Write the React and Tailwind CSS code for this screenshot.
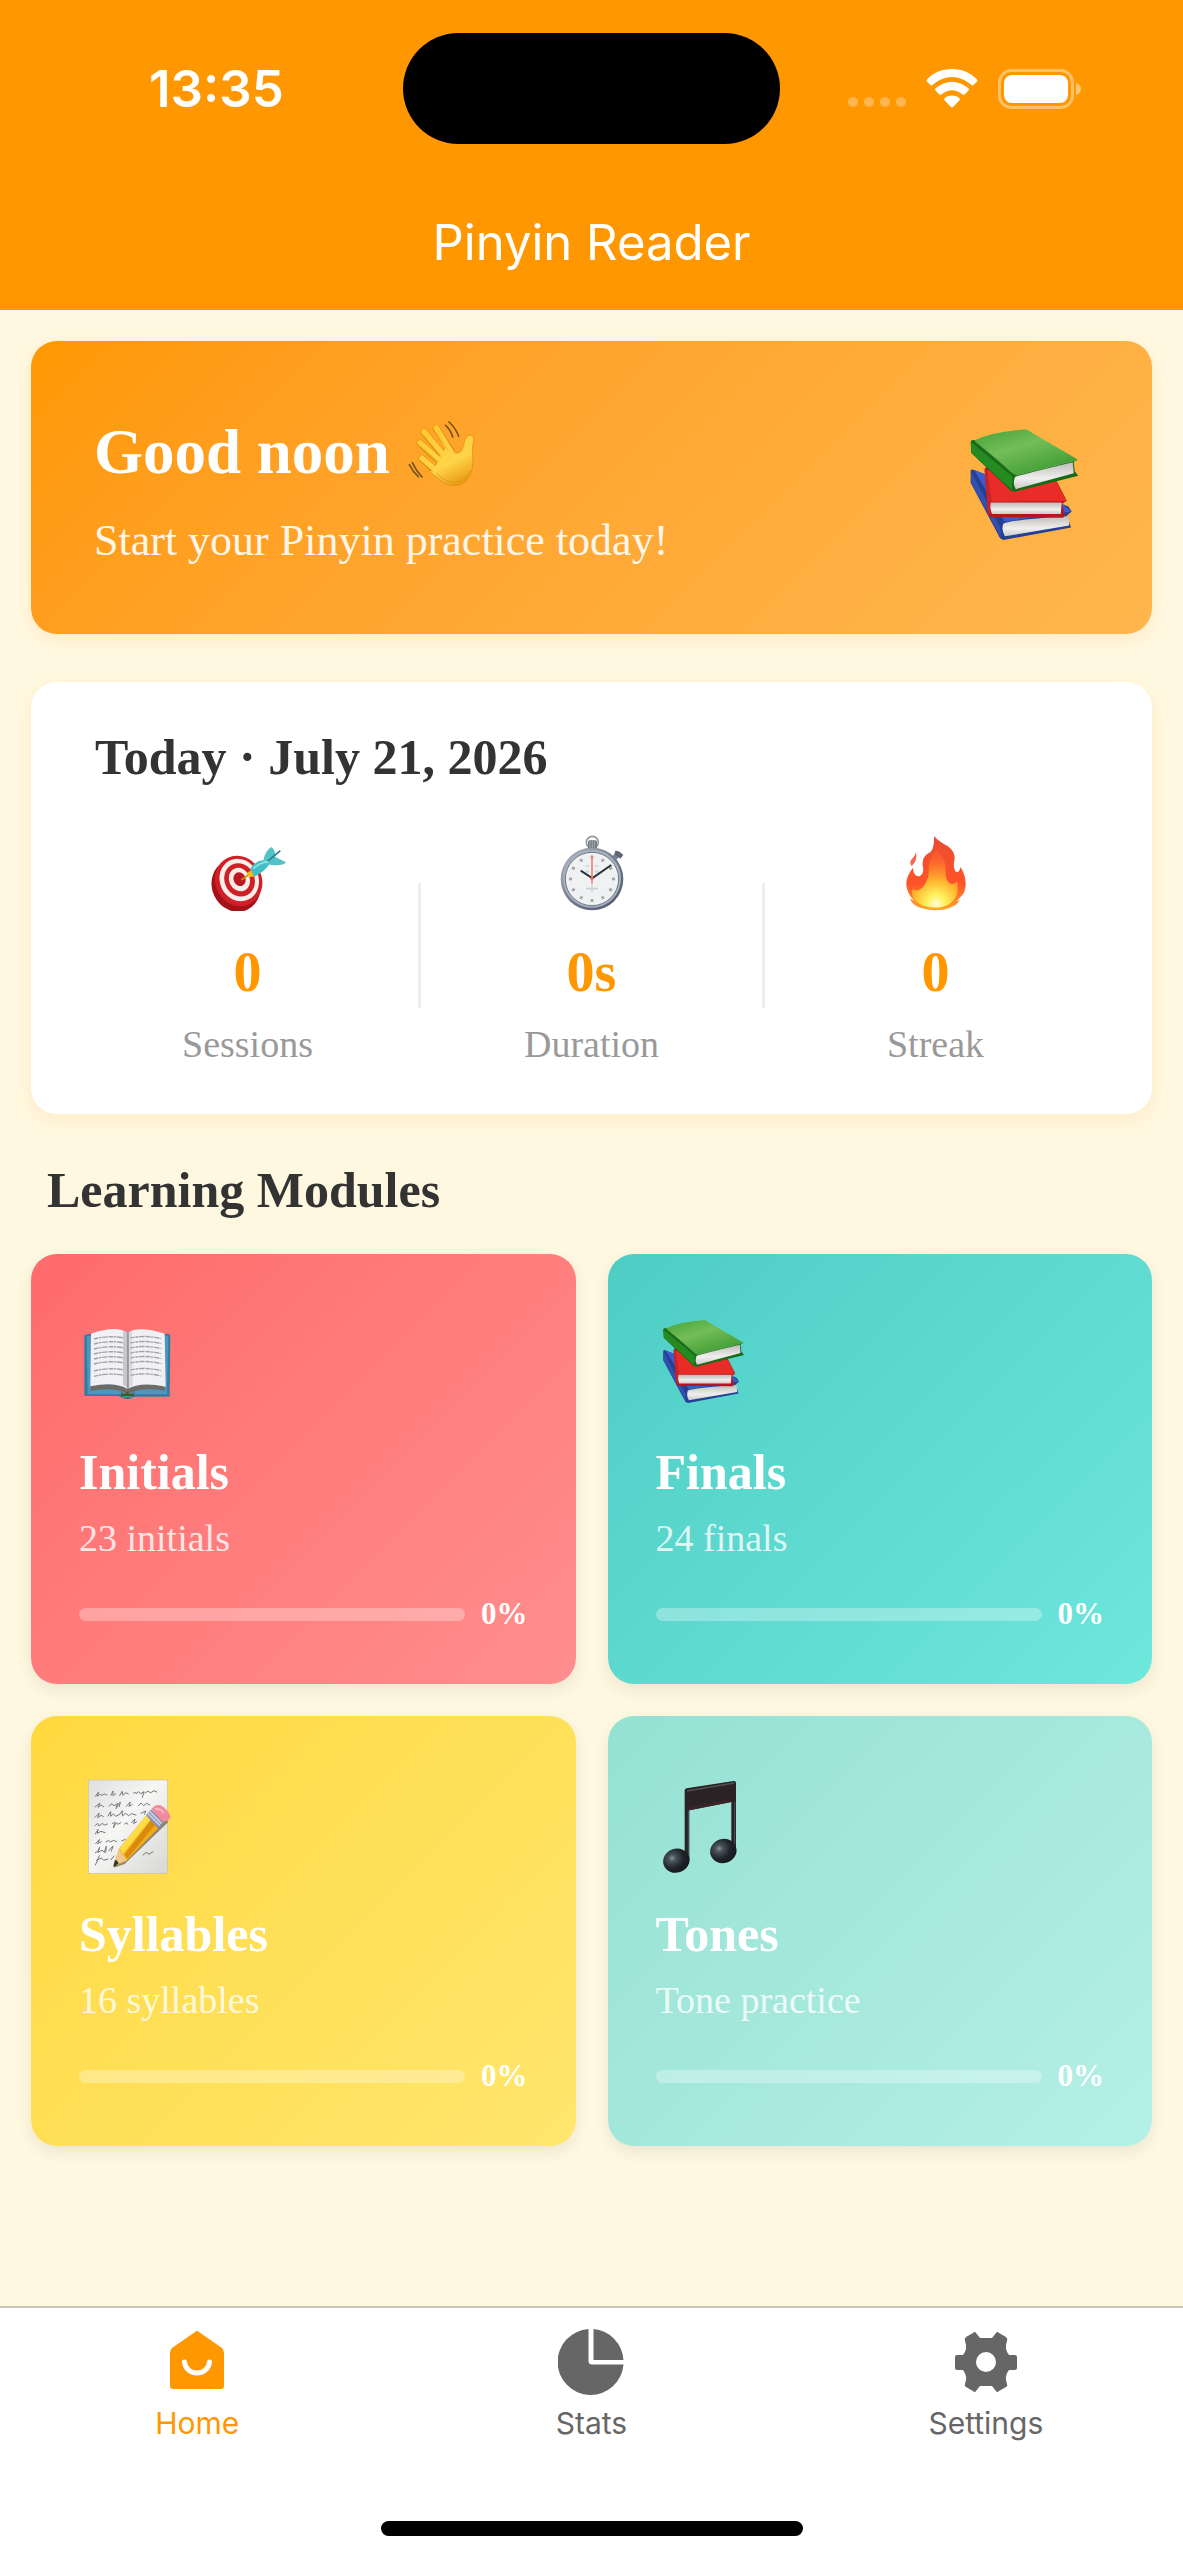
import { useState } from 'react'

const stats = [
  { label: 'Sessions', value: '0', Icon: TargetIcon },
  { label: 'Duration', value: '0s', Icon: StopwatchIcon },
  { label: 'Streak', value: '0', Icon: FireIcon },
]

const modules = [
  { title: 'Initials', sub: '23 initials', progress: 0, Icon: OpenBookIcon, bg: 'from-[#ff6b6b] to-[#ff8e8e]' },
  { title: 'Finals', sub: '24 finals', progress: 0, Icon: BooksIcon, bg: 'from-[#4ecdc4] to-[#6ee7dd]' },
  { title: 'Syllables', sub: '16 syllables', progress: 0, Icon: MemoIcon, bg: 'from-[#ffd93d] to-[#ffe66d]' },
  { title: 'Tones', sub: 'Tone practice', progress: 0, Icon: MusicIcon, bg: 'from-[#95e1d3] to-[#b5f0e6]' },
]

const tabs = [
  { label: 'Home', Icon: HomeIcon },
  { label: 'Stats', Icon: PieIcon },
  { label: 'Settings', Icon: GearIcon },
]

export default function App(){
  const [tab, setTab] = useState('Home')

  return (
    <div className="min-h-screen flex flex-col bg-[#fff8e1] font-['Liberation_Serif',serif] text-[#333]">
      <header className="bg-[#ff9800] text-white">
        <StatusBar />
        <h1 className="pt-[65px] pb-[33px] text-center text-[49px] leading-[68px] font-['Inter',sans-serif]">Pinyin Reader</h1>
      </header>

      <main className="flex-1 px-[31px] pt-[31px]">
        <section className="flex items-center justify-between rounded-[26px] bg-linear-135 from-[#ff9800] to-[#ffb74d] px-[63px] py-[69px] text-white shadow-[0_6px_20px_rgba(255,152,0,0.12)]">
          <div className="pt-[6px]">
            <h2 className="flex items-center gap-4 text-[63px] leading-[72px] font-bold">Good noon <WaveIcon /></h2>
            <p className="mt-[29px] text-[44px] leading-[48px] opacity-90">Start your Pinyin practice today!</p>
          </div>
          <BooksIcon className="size-32" />
        </section>

        <section className="mt-12 rounded-[26px] bg-white px-[46px] pt-[47px] pb-12 shadow-[0_6px_24px_rgba(255,152,0,0.12)]">
          <h2 className="px-[18px] text-[50px] leading-[56px] font-bold">Today · July 21, 2026</h2>
          <div className="mt-10 flex items-center">
            {stats.map((s, i)=>(
              <div key={s.label} className="contents">
                {i > 0 && <div className="h-[125px] w-[3px] bg-[#eee]" />}
                <div className="flex flex-1 flex-col items-center pt-[10px]">
                  <s.Icon />
                  <div className="mt-[29px] text-[56px] leading-[64px] font-bold text-[#ff9800]">{s.value}</div>
                  <div className="mt-[18px] text-[38px] leading-[44px] text-[#999]">{s.label}</div>
                </div>
              </div>
            ))}
          </div>
        </section>

        <h2 className="mt-12 px-4 text-[50px] leading-[56px] font-bold">Learning Modules</h2>
        <div className="mt-9 grid grid-cols-2 gap-8 pb-8">
          {modules.map(m=> <ModuleCard key={m.title} {...m} />)}
        </div>
      </main>

      <footer className="border-t-2 border-[#c9c6ba] bg-white pb-6">
        <nav className="grid grid-cols-3 pt-[21px] font-['Inter',sans-serif]">
          {tabs.map(t=>(
            <a
              key={t.label}
              href={'#' + t.label.toLowerCase()}
              onClick={()=>setTab(t.label)}
              className={`flex flex-col items-center gap-[10px] ${tab===t.label ? 'text-[#ff9800]' : 'text-[#666]'}`}
            >
              <t.Icon />
              <span className="text-[30px] leading-[36px]">{t.label}</span>
            </a>
          ))}
        </nav>
        <div className="mx-auto mt-20 h-[15px] w-[422px] rounded-full bg-black" />
      </footer>
    </div>
  )
}

function StatusBar(){
  return (
    <div className="grid grid-cols-[1fr_377px_1fr] items-center pt-[33px]">
      <div className="pl-[149px] text-[51px] leading-[60px] font-semibold font-['Inter',sans-serif]">13:35</div>
      <div className="h-[111px] rounded-full bg-black" />
      <div className="flex items-center gap-5 pl-[68px]">
        <div className="flex gap-[6px] pt-[26px]">
          {[0, 1, 2, 3].map(n=> <span key={n} className="size-[10px] rounded-full bg-white/30" />)}
        </div>
        <svg className="h-[39px] w-[52px]" viewBox="0 0 52 39" fill="#fff">
          <path d="M26 0C36 0 45 4 51 10.500Q52 11.500 51 12.500L47.500 16Q46.500 17 45.500 16C40 11 33 8 26 8S12 11 6.500 16Q5.500 17 4.500 16L1 12.500Q0 11.500 1 10.500C7 4 16 0 26 0Z" />
          <path d="M26 13C32.500 13 38 15.500 42.500 19.500Q43.500 20.500 42.500 21.500L38.500 25.500Q37.500 26 36.500 25.500C33.500 22.800 30 21.200 26 21.200S18.500 22.800 15.500 25.500Q14.500 26 13.500 25.500L9.500 21.500Q8.500 20.500 9.500 19.500C14 15.500 19.500 13 26 13Z" />
          <path d="M26 26.500C29 26.500 31.500 27.600 33.500 29.200Q34.500 30.200 33.500 31.200L27 38Q26 39 25 38L18.500 31.200Q17.500 30.200 18.500 29.200C20.500 27.600 23 26.500 26 26.500Z" />
        </svg>
        <svg className="h-[40px] w-[83px]" viewBox="0 0 83 40">
          <rect x="1.500" y="1.500" width="73" height="37" rx="12" fill="none" stroke="#fff" strokeOpacity=".4" strokeWidth="3" />
          <rect x="6" y="6" width="64" height="28" rx="8" fill="#fff" />
          <path d="M78 14q5 2 5 6t-5 6z" fill="#fff" fillOpacity=".45" />
        </svg>
      </div>
    </div>
  )
}

function ModuleCard({ title, sub, progress, Icon, bg }){
  return (
    <button className={`rounded-[26px] bg-linear-135 px-12 pt-[62px] pb-[52px] text-left text-white shadow-[0_6px_16px_rgba(0,0,0,0.08)] ${bg}`}>
      <Icon className="size-24" />
      <div className="mt-8 text-[50px] leading-[56px] font-bold">{title}</div>
      <div className="mt-4 text-[38px] leading-[44px] opacity-80">{sub}</div>
      <div className="mt-9 flex items-center gap-4">
        <div className="h-[13px] flex-1 overflow-hidden rounded-full bg-white/30">
          <div className="h-full bg-white" style={{width: progress + '%'}} />
        </div>
        <span className="text-[31px] leading-[36px] font-bold">{progress}%</span>
      </div>
    </button>
  )
}

function WaveIcon(){
  return (
    <svg className="size-[70px]" viewBox="75 45 210 210" fill="none" strokeLinecap="round">
      <defs>
        <linearGradient id="skin" gradientUnits="userSpaceOnUse" x1="140" y1="70" x2="230" y2="250">
          <stop offset="0" stopColor="#ffc930" />
          <stop offset=".65" stopColor="#ffd449" />
          <stop offset="1" stopColor="#e89a13" />
        </linearGradient>
      </defs>
      <g stroke="#d98c0b" strokeWidth="21">
        <path d="M123 170l50 44M118 124l70 64M129 90l65 80M166 79l44 68" />
      </g>
      <path d="M155 205L196 130Q207 136 221 152Q233 158 242 146Q248 132 252 112Q257 99 268 99Q279 102 278 114Q271 143 276 180Q276 224 245 245Q217 257 191 244Q173 233 145 207Z" fill="url(#skin)" stroke="#d98c0b" strokeWidth="2" />
      <g stroke="url(#skin)" strokeWidth="17">
        <path d="M123 169l56 48M118 123l73 65M129 89l68 82M166 78l46 76" />
      </g>
      <path d="M120 177l37 33M119 133l55 47M130 103l48 56M169 94l32 50" stroke="#d99112" strokeWidth="2" opacity=".5" />
      <path d="M168 215Q194 246 236 239Q260 229 270 205" stroke="#d88b0c" strokeWidth="3" opacity=".55" />
      <g stroke="#76501f" strokeWidth="5">
        <path d="M194 70q16 15 21 35M204 60q20 18 29 43M94 182q11 24 29 43M85 188q11 22 27 36" />
      </g>
    </svg>
  )
}

function BooksIcon({ className }){
  return (
    <svg className={className} viewBox="37 66 385 385">
      <defs>
        <linearGradient id="greenCover" x1="0" y1="0" x2=".7" y2="1">
          <stop offset="0" stopColor="#43a237" />
          <stop offset=".45" stopColor="#74bd58" />
          <stop offset="1" stopColor="#3c9b32" />
        </linearGradient>
        <linearGradient id="bookPages" x1="0" y1="0" x2="0" y2="1">
          <stop offset="0" stopColor="#bdbcb9" />
          <stop offset=".6" stopColor="#f0efed" />
          <stop offset="1" stopColor="#cbcac8" />
        </linearGradient>
      </defs>
      {/* blue */}
      <path d="M66 207Q67 200 76 204L360 314L370 329L355 342L368 377L165 415Q153 412 149 399L66 243Z" fill="#253f94" />
      <path d="M76 204L168 360L370 329L340 306Z" fill="#3b5cc9" />
      <path d="M68 210L154 375L158 410L68 244Z" fill="#3350ad" />
      <path d="M164 366Q174 356 361 343L362 371L169 404Q158 386 164 366Z" fill="url(#bookPages)" />
      {/* red */}
      <path d="M108 202Q110 192 122 198L325 238L355 297L341 307L350 341L344 348L129 346Q119 344 118 336Z" fill="#b41620" />
      <path d="M113 204L325 240L354 298L129 300Q121 270 113 204Z" fill="#e92c27" />
      <path d="M108 205Q113 199 117 211L130 300L124 338L118 334Z" fill="#c92328" />
      <path d="M127 302H340L337 337H130Q123 318 127 302Z" fill="url(#bookPages)" />
      {/* green */}
      <path d="M66 121Q67 112 78 115L388 172L376 180L379 208L390 222L199 270Q187 270 180 260L68 153Z" fill="#176b17" />
      <path d="M78 115Q130 89 233 82L388 173Q293 199 205 220Q196 220 188 211Z" fill="url(#greenCover)" />
      <path d="M67 120L192 224L190 264L69 153Z" fill="#258b20" />
      <path d="M200 225Q214 219 373 181L376 214L202 262Q191 246 200 225Z" fill="url(#bookPages)" />
      <path d="M79 118L204 219L386 174" fill="none" stroke="#5ba64b" strokeWidth="3" />
    </svg>
  )
}

function TargetIcon(){
  return (
    <svg className="size-[76px]" viewBox="57 44 228 228">
      <g transform="rotate(-25 140 190)">
        <ellipse cx="133" cy="193" rx="72" ry="80" fill="#a51118" />
        <ellipse cx="146" cy="184" rx="70" ry="77" fill="#d02027" />
        <ellipse cx="149" cy="182" rx="58" ry="65" fill="#f8eeea" />
        <ellipse cx="150" cy="182" rx="45" ry="51" fill="#cf2028" />
        <ellipse cx="150" cy="181" rx="31" ry="36" fill="#f8eeea" />
        <ellipse cx="151" cy="180" rx="18" ry="21" fill="#bd171f" />
      </g>
      <path d="M151 179L186 153" stroke="#c89116" strokeWidth="5" />
      <path d="M167 158l13-8 13 18-19 3z" fill="#f2bb16" />
      <path d="M178 145Q190 122 218 119L238 128Q220 155 190 169Z" fill="#42bfc5" />
      <path d="M217 121Q222 91 241 80Q254 89 252 109L285 126Q276 138 240 134L228 130Z" fill="#51c3c9" />
      <path d="M226 126L268 91" stroke="#277f8b" strokeWidth="5" />
      <path d="M187 145Q207 125 232 124" fill="none" stroke="#8ae1e1" strokeWidth="6" />
    </svg>
  )
}

function StopwatchIcon(){
  return (
    <svg className="size-[76px]" viewBox="37 44 228 228">
      <defs>
        <linearGradient id="steel" x1="0" y1="0" x2="1" y2="1">
          <stop offset="0" stopColor="#b4bdcb" />
          <stop offset=".5" stopColor="#717b8b" />
          <stop offset="1" stopColor="#4c586c" />
        </linearGradient>
      </defs>
      <circle cx="152" cy="66" r="18" fill="none" stroke="#929ba8" strokeWidth="5" />
      <rect x="139" y="60" width="27" height="26" rx="5" fill="#727a86" />
      <path d="M145 62v20M152 62v20M159 62v20" stroke="#bec5cc" strokeWidth="2" />
      <path d="M213 108l12-16 13 10-13 16z" fill="#77808c" />
      <path d="M221 91q13 0 24 13l-9 11-18-13z" fill="#5d6672" />
      <circle cx="151" cy="176" r="94" fill="url(#steel)" />
      <circle cx="151" cy="175" r="87" fill="#a8b1c0" />
      <circle cx="151" cy="176" r="80" fill="#f0f1f3" stroke="#6f7988" strokeWidth="3" />
      <g stroke="#a2a4a6" strokeWidth="8">
        {[0, 30, 60, 90, 120, 150, 180, 210, 240, 270, 300, 330].map(a=>(
          <path key={a} d="M151 107v9" transform={`rotate(${a} 151 176)`} />
        ))}
      </g>
      <path d="M132 137h10M160 137h10M132 154h10M160 154h10M133 205h36M151 195v21" stroke="#cfd0d2" strokeWidth="5" />
      <path d="M151 174L209 134M153 174L117 151" stroke="#28333b" strokeWidth="6" />
      <path d="M151 190V105" stroke="#f08272" strokeWidth="5" />
      <circle cx="151" cy="174" r="5" fill="#e46857" />
    </svg>
  )
}

function FireIcon(){
  return (
    <svg className="size-[76px]" viewBox="18 44 228 228">
      <defs>
        <linearGradient id="flame" x1="0" y1="0" x2="0" y2="1">
          <stop offset="0" stopColor="#e94c31" />
          <stop offset=".65" stopColor="#ff5428" />
          <stop offset="1" stopColor="#ffa629" />
        </linearGradient>
        <radialGradient id="flameCore" gradientUnits="userSpaceOnUse" cx="132" cy="250" r="140">
          <stop offset="0" stopColor="#fffbd0" />
          <stop offset=".2" stopColor="#fff05a" />
          <stop offset=".5" stopColor="#ffb52f" />
          <stop offset="1" stopColor="#ff702c" stopOpacity=".4" />
        </radialGradient>
      </defs>
      <path d="M126 47Q139 63 168 78Q189 94 188 116Q182 139 190 153Q201 160 206 140Q222 167 221 196Q219 216 209 226L194 242L204 240Q189 263 154 268Q109 273 79 260Q59 252 54 234L68 243Q42 217 43 189Q44 166 63 142Q64 169 83 168Q98 157 92 136Q89 111 109 99Q128 91 126 47Z" fill="url(#flame)" />
      <path d="M133 90Q160 112 161 143Q159 184 176 190Q188 193 195 183Q204 222 180 245Q148 273 92 256Q52 238 62 205Q76 218 93 200Q114 174 110 139Q110 117 133 90Z" fill="url(#flameCore)" />
      <path d="M72 95Q78 120 59 137Q49 125 63 112Q69 107 72 95Z" fill="#ef6852" />
    </svg>
  )
}

function OpenBookIcon({ className }){
  const lines = [117, 132, 147, 162, 177, 192, 213, 229]
  return (
    <svg className={className} viewBox="57 51 288 288">
      <path d="M73 109Q86 102 100 105H305Q322 102 331 108L329 293H231Q217 293 218 296Q203 303 186 297Q181 291 173 291H73Z" fill="#38799f" />
      <path d="M80 110H325L321 286H83Z" fill="#4a97bf" />
      <path d="M94 261Q162 247 203 270Q244 245 315 261L314 275Q250 264 216 280Q202 287 189 279Q158 264 91 276Z" fill="#6e6b65" />
      <path d="M93 104Q170 78 203 101Q235 79 314 104L317 263Q240 247 203 270Q163 247 91 262Z" fill="#f1f0f5" />
      <path d="M190 94Q204 94 204 111V269Q196 259 189 257Z" fill="#8f8d93" opacity=".42" />
      <path d="M216 94Q204 96 204 111V269Q212 259 218 257Z" fill="#a7a5aa" opacity=".3" />
      <path d="M204 100V270" stroke="#696669" strokeWidth="3" />
      <g fill="none" stroke="#a3a1a8" strokeWidth="4" strokeDasharray="13 2 8 2 17 3">
        {lines.map(y=> <path key={y} d={`M102 ${y+3}Q146 ${y-9} 192 ${y}M212 ${y}Q254 ${y-10} 304 ${y+2}`} />)}
      </g>
      <path d="M183 278Q194 292 202 278Q211 292 224 278L218 295Q202 301 185 295Z" fill="#4a561d" />
      <path d="M186 296Q202 290 220 296" fill="none" stroke="#45a3d1" strokeWidth="4" />
    </svg>
  )
}

function MemoIcon({ className }){
  return (
    <svg className={className} viewBox="0 0 288 288">
      <defs>
        <linearGradient id="paper" x1="0" y1="0" x2="1" y2="1">
          <stop offset="0" stopColor="#dedfdf" />
          <stop offset=".45" stopColor="#f6f6f4" />
          <stop offset="1" stopColor="#d7d7d5" />
        </linearGradient>
      </defs>
      <rect x="28" y="6" width="237" height="280" fill="url(#paper)" stroke="#c9c2a4" strokeWidth="2" />
      {/* handwriting */}
      <g fill="none" stroke="#77777a" strokeWidth="3" strokeLinecap="round">
        <path d="M49 55l10-13-5 13 8-6 5 3 9-4 8 3m12 1l6-13v14l8-6m12 6l7-13 3 12 8-8 8 4m15-2q6-8 8 1l7-6 7 6 10-6-5 17m8-13l10-6 6 6 11-7 8 4" />
        <path d="M48 87l15-12-6 13 9-7 8 5m16-2l9-7 6 7 11-8-5 16 8-14 5-6-3 14m21-1l12-13-4 13 9-5m19 3l8-8 8 8 9-7 9 5" />
        <path d="M48 118l13-13-5 14 10-7 7 4m14-2l8-13v14l8-7 8 7 12-7 7-10v16l10-8 9 7 9-6 13 4m15-5l14-7-3 10" />
        <path d="M48 143l8-7 4 8 10-8 6 5 9-3m15-1q9-9 7 0l-4 13 8-16 6 5 8-5m12 4l6-4 3 5m12-5l10-11-4 14 9-6" />
        <path d="M49 168l8-14-2 12 11-6 12 4M50 197l12-13-6 13 11-6m14 1l8-5 5 5 10-5 9 4m15-2l11-5" />
        <path d="M49 224l9-6 4-11-5 17 12-8 7 7 6-18-2 18m9-5l13-14-5 16M49 261l7-14 5-14m-9 14l15-7 7 7 13-4m9 2l9-11M192 231l10-8 8 6 12-8" />
      </g>
      <path d="M105 269L119 241L240 93L268 132L137 258Z" fill="#5c513e" opacity=".65" />
      <path d="M104 258L121 211L201 113L238 151L144 247L106 266Z" fill="#f3aa16" />
      <path d="M122 211L201 113L214 125L133 227Z" fill="#ffdc45" />
      <path d="M136 231L216 127L228 140L146 241Z" fill="#d98a0d" />
      <path d="M104 260L120 211L144 248Z" fill="#efc88c" />
      <path d="M104 261L108 246Q114 245 119 256L107 266Q101 267 104 261Z" fill="#35343a" />
      <path d="M201 112L217 94L251 132L237 151Z" fill="#8792b1" />
      <path d="M207 107l36 36M212 100l36 37" stroke="#cad0df" strokeWidth="5" />
      <path d="M217 94Q231 75 249 84Q268 97 274 115Q276 127 251 132Z" fill="#f08b9d" />
      <path d="M228 94Q241 88 255 105" fill="none" stroke="#f8b2bd" strokeWidth="7" />
    </svg>
  )
}

function MusicIcon({ className }){
  return (
    <svg className={className} viewBox="0 0 288 288">
      <defs>
        <radialGradient id="noteHead" cx=".38" cy=".35" r=".7">
          <stop offset="0" stopColor="#89929b" />
          <stop offset=".2" stopColor="#4a525b" />
          <stop offset=".6" stopColor="#20242b" />
          <stop offset="1" stopColor="#14171b" />
        </radialGradient>
      </defs>
      <path d="M86 37Q86 32 92 31L233 9Q240 8 240 15V217H226V72L100 97V246H86Z" fill="#292326" />
      <path d="M93 39L235 15" stroke="#555055" strokeWidth="5" />
      <path d="M100 86L226 62V72L100 97Z" fill="#3a2428" />
      <path d="M97 97V240M236 72V210" stroke="#4a5260" strokeWidth="3" />
      <ellipse cx="61" cy="248" rx="40" ry="36" fill="url(#noteHead)" transform="rotate(-18 61 248)" />
      <ellipse cx="202" cy="219" rx="40" ry="36" fill="url(#noteHead)" transform="rotate(-18 202 219)" />
    </svg>
  )
}

function HomeIcon(){
  return (
    <svg className="size-[66px]" viewBox="0 0 66 66">
      <path d="M31 3Q33 1 35 3L58 19Q60 21 60 24V57Q60 60 57 60H9Q6 60 6 57V24Q6 21 8 19Z" fill="currentColor" />
      <path d="M20.500 33C21 39 26 44 33 44S45 39 45.500 33" fill="none" stroke="#fff" strokeWidth="5" strokeLinecap="round" />
    </svg>
  )
}

function PieIcon(){
  return (
    <svg className="size-[66px]" viewBox="0 0 66 66" fill="currentColor">
      <path d="M30.500 0A33 33 0 1 0 65.500 35.500H34Q30.500 35.500 30.500 32Z" />
      <path d="M35.500 0A33 33 0 0 1 65.500 31H35.500Z" />
    </svg>
  )
}

function GearIcon(){
  return (
    <svg className="size-[66px]" viewBox="0 0 66 66">
      <path
        d="M20 4Q22 2 23 4L27 9H39L43 4Q44 2 46 4L53 8Q55 10 54 12Q51 20 56 26L62 26Q64 26 64 28V39Q64 41 62 41L56 41Q51 47 54 55Q55 57 53 58L46 62Q44 64 43 62L39 57H27L23 62Q22 64 20 62L13 58Q11 57 12 55Q15 47 10 41L4 41Q2 41 2 39V28Q2 26 4 26L10 26Q15 20 12 12Q11 10 13 8Z"
        fill="currentColor"
      />
      <circle cx="33" cy="33" r="10" fill="#fff" />
    </svg>
  )
}
